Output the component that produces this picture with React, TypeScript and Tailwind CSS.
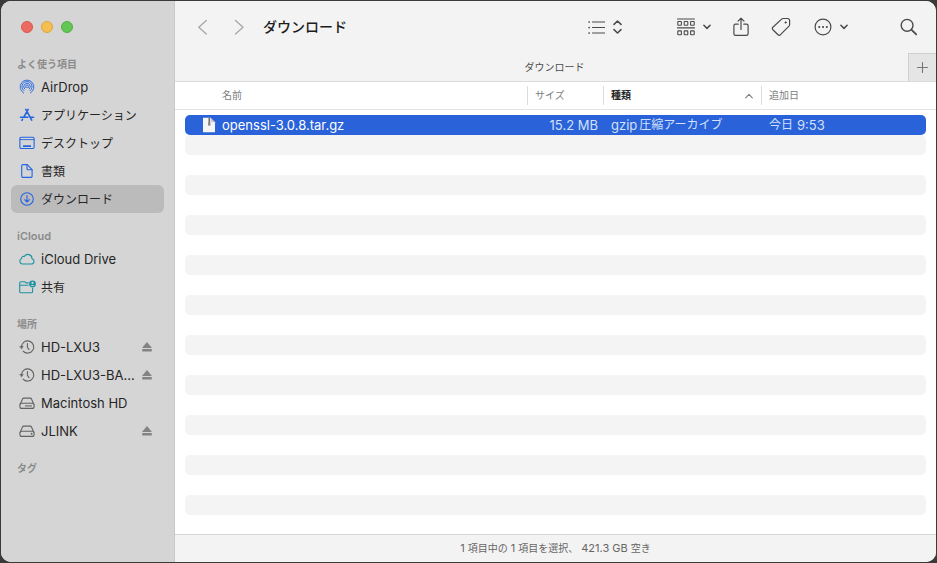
import type { ReactNode } from "react";

const stroke = {
  fill: "none",
  stroke: "currentColor",
  strokeLinecap: "round" as const,
  strokeLinejoin: "round" as const,
  "aria-hidden": true,
};

function AirDropIcon() {
  return (
    <svg {...stroke} viewBox="0 0 16 16" className="size-4 shrink-0" strokeWidth=".9">
      <path d="M4.6 14a6.900 6.900 0 1 1 6.800 0" />
      <path d="M5 11.800a5.100 5.100 0 1 1 6 0" />
      <path d="M5.700 10a3.300 3.300 0 1 1 4.600 0" />
      <path d="M6.800 8.700a1.600 1.600 0 1 1 2.400 0" />
      <path d="M8 8.200v.1" strokeWidth="1.200" />
    </svg>
  );
}

function AppsIcon() {
  return (
    <svg {...stroke} viewBox="0 0 16 16" className="size-4 shrink-0" strokeWidth="1.6">
      <path d="M9.2 2.4 4.9 9.800M6.8 2.400l5.900 10.800M1.500 10.200h7.300M11.800 10.200h2.700M3.500 12.300l-.6 1.100" />
    </svg>
  );
}

function DesktopIcon() {
  return (
    <svg {...stroke} viewBox="0 0 16 16" className="size-4 shrink-0" strokeWidth="1.1">
      <rect x=".9" y="2.3" width="14.2" height="11.2" rx="1.2" />
      <path d="M1 4.600h14" strokeWidth=".9" />
      <path d="M4 11.200h8" strokeWidth="1.8" strokeLinecap="butt" />
    </svg>
  );
}

function DocumentIcon() {
  return (
    <svg {...stroke} viewBox="0 0 16 16" className="size-4 shrink-0" strokeWidth="1.1">
      <path d="M3.9 1.6h4.3l4.9 5v6.6a1.2 1.2 0 0 1-1.2 1.2h-8a1.2 1.2 0 0 1-1.2-1.2V2.8a1.2 1.2 0 0 1 1.2-1.2Z" />
      <path d="M8 1.8v3.9a1 1 0 0 0 1 1h4" />
    </svg>
  );
}

function DownloadIcon() {
  return (
    <svg {...stroke} viewBox="0 0 16 16" className="size-4 shrink-0" strokeWidth="1.1">
      <circle cx="8" cy="8" r="6.3" />
      <path d="M8 4.600v6.200M5.700 8.700 8 11l2.300-2.300" />
    </svg>
  );
}

function CloudIcon() {
  return (
    <svg {...stroke} viewBox="0 0 16 16" className="size-4 shrink-0" strokeWidth="1.1">
      <path d="M3.5 13h8.900a2.700 2.700 0 0 0 .6-5.300 4.100 4.100 0 0 0-7.700-2.100 2.100 2.100 0 0 0-2.900 2.100 2.800 2.800 0 0 0 1.100 5.300Z" />
    </svg>
  );
}

function SharedIcon() {
  return (
    <svg {...stroke} viewBox="0 0 16 16" className="size-4 shrink-0 overflow-visible" strokeWidth="1.1">
      <path d="M9.4 3.9H6.9L5.7 2.7H2A1.3 1.3 0 0 0 .7 4v8.4a1.3 1.3 0 0 0 1.3 1.3h10.3a1.3 1.3 0 0 0 1.3-1.3V9M.8 6.2h8.3" />
      <circle cx="13.500" cy="4.900" r="3.400" fill="currentColor" stroke="none" />
      <circle cx="13.500" cy="3.900" r="1.100" fill="#d5d5d5" stroke="none" />
      <path d="M11.700 7a1.900 1.600 0 0 1 3.600 0Z" fill="#d5d5d5" stroke="none" />
    </svg>
  );
}

function TimeMachineIcon() {
  return (
    <svg {...stroke} viewBox="0 0 16 16" className="size-4 shrink-0" strokeWidth="1.1">
      <path d="M2.500 8a6.100 6.100 0 1 1 1.600 4.100M8.400 4.600v3.700l1.600 2.300" />
      <path d="M.8 7.300h3.600L2.600 9.900Z" fill="currentColor" strokeWidth=".3" />
    </svg>
  );
}

function DriveIcon({ ticks = false }: { ticks?: boolean }) {
  return (
    <svg {...stroke} viewBox="0 0 16 16" className="size-4 shrink-0" strokeWidth="1.1">
      <path d="M1.200 9.200 3.400 4.200a1.700 1.700 0 0 1 1.600-1.100h6a1.700 1.700 0 0 1 1.600 1.100l2.200 5" />
      <rect x=".9" y="8.200" width="14.200" height="5.200" rx="2" />
      {ticks ? (
        <path d="M6 10.800h6.600" strokeWidth="1.800" strokeDasharray=".6 .4" strokeLinecap="butt" />
      ) : (
        <circle cx="12.600" cy="10.800" r=".4" />
      )}
    </svg>
  );
}

type Place = { label: string; icon: ReactNode; eject?: boolean; current?: boolean; latin?: boolean };
type Group = { title: string; tone: string; latin?: boolean; places: Place[] };

const groups: Group[] = [
  {
    title: "よく使う項目",
    tone: "text-[#2364e2]",
    places: [
      { label: "AirDrop", icon: <AirDropIcon />, latin: true },
      { label: "アプリケーション", icon: <AppsIcon /> },
      { label: "デスクトップ", icon: <DesktopIcon /> },
      { label: "書類", icon: <DocumentIcon /> },
      { label: "ダウンロード", icon: <DownloadIcon />, current: true },
    ],
  },
  {
    title: "iCloud",
    tone: "text-[#1d93a3]",
    latin: true,
    places: [
      { label: "iCloud Drive", icon: <CloudIcon />, latin: true },
      { label: "共有", icon: <SharedIcon /> },
    ],
  },
  {
    title: "場所",
    tone: "text-[#626262]",
    places: [
      { label: "HD-LXU3", icon: <TimeMachineIcon />, eject: true, latin: true },
      { label: "HD-LXU3-BA...", icon: <TimeMachineIcon />, eject: true, latin: true },
      { label: "Macintosh HD", icon: <DriveIcon ticks />, latin: true },
      { label: "JLINK", icon: <DriveIcon />, eject: true, latin: true },
    ],
  },
  { title: "タグ", tone: "", places: [] },
];

function Sidebar() {
  return (
    <aside className="w-[174px] shrink-0 border-r border-[#c9c9c9] bg-[#d5d5d5] px-2.5">
      <div className="flex h-[52px] items-center gap-2 pl-2.5">
        <button aria-label="閉じる" className="size-3 rounded-full border border-[#d8574e] bg-[#ec6a5f]" />
        <button aria-label="しまう" className="size-3 rounded-full border border-[#dba53f] bg-[#f4be50]" />
        <button aria-label="拡大" className="size-3 rounded-full border border-[#56ad45] bg-[#62c655]" />
      </div>
      <nav className="flex flex-col gap-3">
        {groups.map((group) => (
          <section key={group.title}>
            <h2
              className={`h-5 pt-px pl-1.5 leading-5 text-[#8b8b8b] ${
                group.latin ? "text-[11px] font-semibold" : "text-[10px] font-bold"
              }`}
            >
              {group.title}
            </h2>
            <ul>
              {group.places.map((place) => (
                <li
                  key={place.label}
                  className={`flex h-7 items-center rounded-md px-2 ${place.current ? "bg-[#bbbbbb]" : ""}`}
                >
                  <a href="#" className={`flex min-w-0 flex-1 items-center gap-1.5 ${group.tone}`}>
                    {place.icon}
                    <span
                      className={`pt-0.5 whitespace-nowrap text-[#262626] ${place.latin ? "text-[13px]" : "text-xs"}`}
                    >
                      {place.label}
                    </span>
                  </a>
                  {place.eject && (
                    <button
                      aria-label={`${place.label}を取り出す`}
                      className="flex w-[18px] justify-center text-[#838383]"
                    >
                      <svg viewBox="0 0 10 10" className="size-2.5" fill="currentColor" aria-hidden="true">
                        <path d="M4.600.5q.4-.4.8 0L9.600 5.400q.3.700-.4.700H.8q-.7 0-.4-.7Z" />
                        <rect x=".2" y="7" width="9.600" height="2.600" rx=".5" />
                      </svg>
                    </button>
                  )}
                </li>
              ))}
            </ul>
          </section>
        ))}
      </nav>
    </aside>
  );
}

function SmallChevron() {
  return (
    <svg {...stroke} viewBox="0 0 8 6" className="h-1.5 w-2" strokeWidth="1.5">
      <path d="m.9 1.300 3.100 3.100 3.100-3.100" />
    </svg>
  );
}

function Toolbar() {
  return (
    <header className="flex h-[52px] items-center pr-[18px] pl-[22px] text-[#4a4a4a]">
      <div className="flex gap-5 text-[#a9a9a9]">
        <button aria-label="戻る">
          <svg {...stroke} viewBox="0 0 16 16" className="size-4 overflow-visible" strokeWidth="1.4">
            <path d="M9.300 1.500 1.800 8.200l7.500 6.700" />
          </svg>
        </button>
        <button aria-label="進む">
          <svg {...stroke} viewBox="0 0 16 16" className="size-4 overflow-visible" strokeWidth="1.4">
            <path d="m2.500 1.500 7.500 6.700-7.500 6.700" />
          </svg>
        </button>
      </div>
      <h1 className="ml-3.5 text-sm font-medium text-[#1c1c1c]">ダウンロード</h1>
      <div className="ml-auto flex items-center">
        <button aria-label="表示方法" className="flex items-center gap-2">
          <svg {...stroke} viewBox="0 0 17 14" className="h-3.5 w-[17px]" strokeWidth="1.200">
            <path d="M4.500 2h12M4.500 7.500h12M4.500 13h12" />
            <path d="M1.100 2h.1M1.100 7.500h.1M1.100 13h.1" strokeWidth="1.700" />
          </svg>
          <svg {...stroke} viewBox="0 0 9 14" className="h-3.5 w-[9px]" strokeWidth="1.500">
            <path d="M1 4.400 4.500 1 8 4.400M1 9.600 4.500 13 8 9.600" />
          </svg>
        </button>
        <button aria-label="グループ分け" className="ml-[55px] flex items-center gap-2">
          <svg {...stroke} viewBox="0 0 18 18" className="size-[18px]" strokeWidth="1.100">
            <path d="M.5 1h17M.5 9.900h17" />
            <rect x=".8" y="3.500" width="3.600" height="3.800" rx=".5" />
            <rect x="7.200" y="3.500" width="3.600" height="3.800" rx=".5" />
            <rect x="13.600" y="3.500" width="3.600" height="3.800" rx=".5" />
            <rect x=".8" y="12.900" width="3.600" height="3.800" rx=".5" />
            <rect x="7.200" y="12.900" width="3.600" height="3.800" rx=".5" />
            <rect x="13.600" y="12.900" width="3.600" height="3.800" rx=".5" />
          </svg>
          <SmallChevron />
        </button>
        <button aria-label="共有" className="ml-[22px]">
          <svg {...stroke} viewBox="0 0 16 20" className="h-5 w-4" strokeWidth="1.200">
            <path d="M5.200 7.200H2.500A1.600 1.600 0 0 0 .9 8.800v8a1.600 1.600 0 0 0 1.600 1.600h11a1.600 1.600 0 0 0 1.600-1.600v-8a1.600 1.600 0 0 0-1.600-1.600h-2.700M8 12.500V1.300M5 4.100l3-2.900 3 2.900" />
          </svg>
        </button>
        <button aria-label="タグ" className="ml-[22px]">
          <svg {...stroke} viewBox="0 0 20 20" className="size-5" strokeWidth="1.200">
            <path d="M12.100 1.500h4.400a2.100 2.100 0 0 1 2.100 2.100v4a2.200 2.200 0 0 1-.6 1.500l-8.500 8.600a1.800 1.800 0 0 1-2.500 0l-5.100-5a1.800 1.800 0 0 1 0-2.500l8.700-8.100a2.200 2.200 0 0 1 1.500-.6Z" />
            <circle cx="14.600" cy="5.500" r=".8" fill="currentColor" strokeWidth=".6" />
          </svg>
        </button>
        <button aria-label="その他" className="ml-[23px] flex items-center gap-2">
          <svg {...stroke} viewBox="0 0 18 18" className="size-[18px]" strokeWidth="1.200">
            <circle cx="9" cy="9" r="7.900" />
            <path d="M5.200 9h.1M9 9h.1M12.800 9h.1" strokeWidth="2" />
          </svg>
          <SmallChevron />
        </button>
        <button aria-label="検索" className="ml-[52px]">
          <svg {...stroke} viewBox="0 0 18 18" className="size-[18px]" strokeWidth="1.400">
            <circle cx="7.100" cy="7.300" r="5.900" />
            <path d="m11.600 11.800 4.600 4.500" strokeWidth="1.800" />
          </svg>
        </button>
      </div>
    </header>
  );
}

const emptyRows = Array.from({ length: 20 }, (_, i) => i);

function HeaderLabel({ children }: { children: ReactNode }) {
  return (
    <div className="flex h-[19px] items-center justify-between border-l border-[#dcdcdc] pr-2 pl-[7px]">
      {children}
    </div>
  );
}

function FileTable() {
  return (
    <table className="w-full table-fixed border-separate border-spacing-0 text-left">
      <colgroup>
        <col className="w-2.5" />
        <col />
        <col className="w-[76px]" />
        <col className="w-[158px]" />
        <col className="w-[165px]" />
        <col className="w-2.5" />
      </colgroup>
      <thead className="text-[10px] text-[#7d7d7d] [&_td]:border-b [&_td]:border-[#e3e3e3] [&_th]:h-7 [&_th]:border-b [&_th]:border-[#e3e3e3] [&_th]:p-0 [&_th]:font-normal">
        <tr>
          <td />
          <th scope="col">
            <div className="pl-[37px]">名前</div>
          </th>
          <th scope="col">
            <HeaderLabel>サイズ</HeaderLabel>
          </th>
          <th scope="col" aria-sort="ascending">
            <HeaderLabel>
              <span className="font-bold text-[#242424]">種類</span>
              <svg {...stroke} viewBox="0 0 8 6" className="h-1.5 w-2" strokeWidth="1.100">
                <path d="M.7 4.800 4 1.300l3.300 3.500" />
              </svg>
            </HeaderLabel>
          </th>
          <th scope="col">
            <HeaderLabel>追加日</HeaderLabel>
          </th>
          <td />
        </tr>
      </thead>
      <tbody className="[&_td]:p-0">
        <tr aria-hidden="true">
          <td colSpan={6} className="h-[5px]" />
        </tr>
        <tr className="h-5 text-[13px] leading-5 whitespace-nowrap text-[#d3e0f8]">
          <td />
          <td className="rounded-l-[5px] bg-[#2a63d9]">
            <div className="flex items-center gap-1.5 pl-[17px] text-white">
              <svg viewBox="0 0 14 16" className="h-4 w-3.5" aria-hidden="true">
                <path d="M1 .8h7.500L13 5.300v9.900H1Z" fill="#f5f5f5" />
                <path d="M8.500.8 13 5.300H8.500Z" fill="#cbcbcb" />
                <path d="M6.500.8h1.500v7.500H6.500Z" fill="#6c6c6c" />
                <path d="M6 5.500h2.500v3H6Z" fill="#8a8a8a" />
              </svg>
              openssl-3.0.8.tar.gz
            </div>
          </td>
          <td className="bg-[#2a63d9]">
            <div className="pr-[5px] text-right">15.2 MB</div>
          </td>
          <td className="bg-[#2a63d9]">
            <div className="flex gap-0.5 pl-2">
              gzip<span className="text-xs leading-5">圧縮アーカイブ</span>
            </div>
          </td>
          <td className="rounded-r-[5px] bg-[#2a63d9]">
            <div className="flex gap-1 pl-2">
              <span className="text-xs leading-5">今日</span>9:53
            </div>
          </td>
          <td />
        </tr>
        {emptyRows.map((row) => (
          <tr key={row} aria-hidden="true" className="h-5">
            <td />
            <td colSpan={4} className={row % 2 === 0 ? "rounded-[5px] bg-[#f4f4f4]" : ""} />
            <td />
          </tr>
        ))}
      </tbody>
    </table>
  );
}

export default function App() {
  return (
    <div className="h-screen bg-[#3a3a3a] p-px font-['Inter','Noto_Sans_CJK_JP',sans-serif]">
      <div className="flex h-full overflow-hidden rounded-[10px] bg-white">
        <Sidebar />
        <main className="flex min-w-0 flex-1 flex-col">
          <div className="border-b border-[#dcdcdc] bg-[#f3f3f3]">
            <Toolbar />
            <div className="flex h-7">
              <div className="flex flex-1 items-center justify-center pl-[26px] text-[10px] text-[#4c4c4c]">
                ダウンロード
              </div>
              <button
                aria-label="新規タブ"
                className="flex w-7 items-center justify-center border-t border-l border-[#d0d0d0] bg-[#e5e5e5] text-[#777777]"
              >
                <svg {...stroke} viewBox="0 0 11 11" className="size-[11px]" strokeWidth="1.100">
                  <path d="M5.500.5v10M.5 5.500h10" />
                </svg>
              </button>
            </div>
          </div>
          <div className="min-h-0 flex-1 overflow-hidden">
            <FileTable />
          </div>
          <footer className="flex h-[28px] shrink-0 items-center justify-center gap-[3px] border-t border-[#d6d6d6] bg-[#f3f3f3] text-[10px] text-[#666666]">
            <span className="text-[11px]">1</span>項目中の<span className="text-[11px]">1</span>
            項目を選択、<span className="text-[11px]">421.3 GB</span>空き
          </footer>
        </main>
      </div>
    </div>
  );
}
